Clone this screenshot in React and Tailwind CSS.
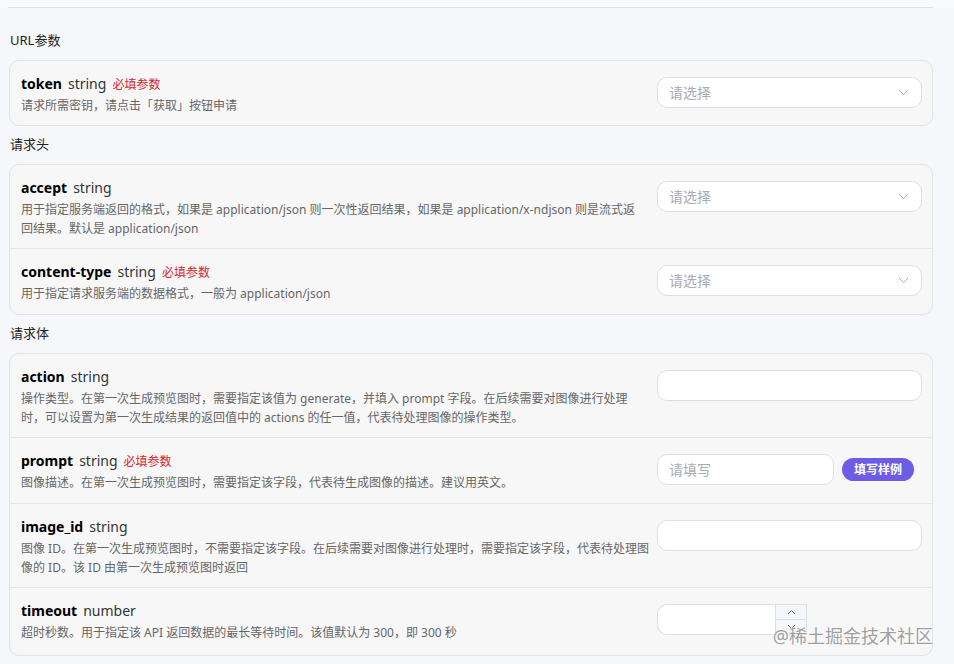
import React from "react";

const FONT = { fontFamily: '"Noto Sans", "Noto Sans CJK SC", sans-serif' };

function Chevron() {
  return (
    <svg width="11" height="7" viewBox="0 0 11 7" fill="none">
      <path d="M1 1 L5.5 5.5 L10 1" stroke="#a8abb2" strokeWidth="1" />
    </svg>
  );
}

function Select() {
  return (
    <div className="h-[31px] rounded-[10px] border border-[#dcdfe6] bg-white pl-[11px] pr-[12px] flex items-center justify-between">
      <span className="text-[14px] text-[#a8abb2]">请选择</span>
      <Chevron />
    </div>
  );
}

function Input({ placeholder }) {
  return (
    <div className="h-[31px] rounded-[10px] border border-[#dcdfe6] bg-white pl-[11px] flex items-center">
      {placeholder && <span className="text-[14px] text-[#a8abb2]">{placeholder}</span>}
    </div>
  );
}

function PromptControl() {
  return (
    <div className="flex items-center">
      <div className="w-[177px]">
        <Input placeholder="请填写" />
      </div>
      <button className="ml-[8px] h-[23px] w-[72px] rounded-full bg-[#6e5ce6] text-white text-[12px] font-semibold flex items-center justify-center">
        填写样例
      </button>
    </div>
  );
}

function NumberControl() {
  return (
    <div className="flex h-[31px]">
      <div className="w-[118px] h-full rounded-l-[10px] border-y border-l border-[#dcdfe6] bg-white" />
      <div className="w-[32px] h-full border border-[#dcdfe6] bg-white flex flex-col">
        <div className="h-1/2 bg-[#f5f7fa] border-b border-[#dcdfe6] flex items-center justify-center">
          <svg width="9" height="6" viewBox="0 0 9 6" fill="none">
            <path d="M1 5 L4.5 1.5 L8 5" stroke="#606266" strokeWidth="1" />
          </svg>
        </div>
        <div className="h-1/2 bg-[#f5f7fa] flex items-center justify-center">
          <svg width="9" height="6" viewBox="0 0 9 6" fill="none">
            <path d="M1 1 L4.5 4.5 L8 1" stroke="#606266" strokeWidth="1" />
          </svg>
        </div>
      </div>
    </div>
  );
}

function Row({ name, type, required, desc, control, last, pb = "pb-[10px]" }) {
  return (
    <div
      className={
        "flex items-start pl-[11px] pr-[10px] pt-[13px] " +
        pb +
        " " +
        (last ? "" : "border-b border-[#e4e5e8]")
      }
    >
      <div className="flex-1 min-w-0 pr-[6px]">
        <div className="flex items-baseline h-[20px] leading-[20px] whitespace-nowrap">
          <span className="font-bold text-[14px] text-black">{name}</span>
          <span className="ml-[6px] text-[14px] text-[#333]">{type}</span>
          {required && (
            <span className="ml-[6px] text-[12px] text-[#d9252b]">必填参数</span>
          )}
        </div>
        <div className="mt-[2px] text-[12px] leading-[19px] text-[#666]">{desc}</div>
      </div>
      <div className="w-[265px] mt-[3px] shrink-0">{control}</div>
    </div>
  );
}

function Card({ children }) {
  return (
    <div className="rounded-[10px] border border-[#e2e3e6] bg-[#f7f7f8] overflow-hidden">
      {children}
    </div>
  );
}

function Label({ children }) {
  return (
    <div className="pl-[1px] h-[38px] flex items-center text-[13px] text-[#222]">
      {children}
    </div>
  );
}

export default function App() {
  return (
    <div style={FONT} className="relative min-h-[664px] bg-[#f6f7fa]">
      <div className="h-[8px] bg-[#f9fafc] flex">
        <div className="ml-[8px] w-[925px] h-full border-b border-[#dcdfe3]" />
      </div>
      <div className="pl-[9px] pr-[21px] pt-[14px] pb-[9px]">
        <Label>URL参数</Label>
        <Card>
          <Row
            last
            name="token"
            type="string"
            required
            desc="请求所需密钥，请点击「获取」按钮申请"
            control={<Select />}
          />
        </Card>
        <Label>请求头</Label>
        <Card>
          <Row
            name="accept"
            type="string"
            desc={
              <>
                用于指定服务端返回的格式，如果是 application/json 则一次性返回结果，如果是 application/x-ndjson 则是流式返
                <br />
                回结果。默认是 application/json
              </>
            }
            control={<Select />}
          />
          <Row
            last
            pb="pb-[11px]"
            name="content-type"
            type="string"
            required
            desc="用于指定请求服务端的数据格式，一般为 application/json"
            control={<Select />}
          />
        </Card>
        <Label>请求体</Label>
        <Card>
          <Row
            name="action"
            type="string"
            desc={
              <>
                操作类型。在第一次生成预览图时，需要指定该值为 generate，并填入 prompt 字段。在后续需要对图像进行处理
                <br />
                时，可以设置为第一次生成结果的返回值中的 actions 的任一值，代表待处理图像的操作类型。
              </>
            }
            control={<Input />}
          />
          <Row
            pb="pb-[11px]"
            name="prompt"
            type="string"
            required
            desc="图像描述。在第一次生成预览图时，需要指定该字段，代表待生成图像的描述。建议用英文。"
            control={<PromptControl />}
          />
          <Row
            name="image_id"
            type="string"
            desc={
              <>
                图像 ID。在第一次生成预览图时，不需要指定该字段。在后续需要对图像进行处理时，需要指定该字段，代表待处理图
                <br />
                像的 ID。该 ID 由第一次生成预览图时返回
              </>
            }
            control={<Input />}
          />
          <Row
            last
            pb="pb-[13px]"
            name="timeout"
            type="number"
            desc="超时秒数。用于指定该 API 返回数据的最长等待时间。该值默认为 300，即 300 秒"
            control={<NumberControl />}
          />
        </Card>
      </div>
      <div
        className="absolute right-[21px] top-[623px] text-[18px] leading-[26px] text-[#a0a0a0] whitespace-nowrap"
        style={{ textShadow: "0 0 2px #fff, 0 0 2px #fff" }}
      >
        @稀土掘金技术社区
      </div>
    </div>
  );
}
